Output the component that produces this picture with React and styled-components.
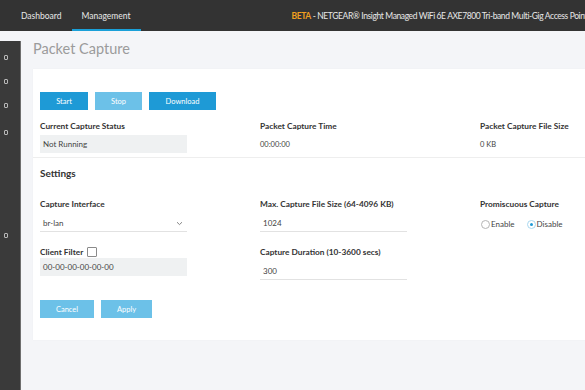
import React from "react";
import styled, { createGlobalStyle } from "styled-components";

const GlobalStyle = createGlobalStyle`
  html, body {
    margin: 0;
    padding: 0;
    background: #f4f5f8;
    font-family: "Lato", "Noto Sans", sans-serif;
    overflow: hidden;
  }
  * { box-sizing: border-box; }
`;

const Page = styled.div`
  width: 585px;
  height: 390px;
  display: flex;
  flex-direction: column;
  overflow: hidden;
`;

const Header = styled.div`
  display: flex;
  align-items: stretch;
  height: 31px;
  background: #333333;
  flex-shrink: 0;
  overflow: hidden;
`;

const Nav = styled.div`
  display: flex;
  padding-left: 11px;
`;

const Tab = styled.div`
  display: flex;
  align-items: center;
  padding: 0 10px;
  font-size: 8.5px;
  color: #e8e8e8;
  border-bottom: 2px solid ${(p) => (p.$active ? "#1aa0d8" : "transparent")};
  padding-top: 2px;
`;

const ProductTitle = styled.div`
  display: flex;
  align-items: center;
  margin-left: 151px;
  white-space: nowrap;
  font-size: 8.5px;
  letter-spacing: -0.39px;
  color: #e8e8e8;
  b {
    font-weight: 700;
    color: #f0a020;
  }
`;

const Body = styled.div`
  display: flex;
  flex: 1;
  min-height: 0;
`;

const Sidebar = styled.div`
  width: 21px;
  margin-top: 10px;
  background: #3a3a3a;
  border-right: 1px solid #6e6e6e;
  display: flex;
  flex-direction: column;
  align-items: flex-start;
  padding: 14px 0 0 4px;
  flex-shrink: 0;
`;

const SideIcon = styled.span`
  display: block;
  width: 4px;
  height: 5px;
  border: 1px solid #b8b8b8;
  border-radius: 1px;
  margin-bottom: ${(p) => p.$gap}px;
`;

const Main = styled.div`
  flex: 1;
  padding-left: 12px;
  min-width: 0;
`;

const PageTitle = styled.div`
  height: 38px;
  display: flex;
  align-items: center;
  padding-bottom: 3px;
  font-size: 14.5px;
  color: #9b9b9b;
`;

const Card = styled.div`
  width: 700px;
  background: #ffffff;
  padding: 23px 7px 22px;
  box-shadow: 0 0 1px rgba(0, 0, 0, 0.06);
`;

const ButtonRow = styled.div`
  display: flex;
  gap: 7px;
  margin-top: ${(p) => p.$top || 0}px;
`;

const Button = styled.div`
  height: 18px;
  width: ${(p) => p.$w}px;
  display: flex;
  align-items: center;
  justify-content: center;
  font-size: 7.5px;
  color: #ffffff;
  background: ${(p) => (p.$dim ? "#6cc1e8" : "#1e9ad6")};
`;

const Grid = styled.div`
  display: grid;
  grid-template-columns: 220px 220px 220px;
  align-items: start;
  margin-top: ${(p) => p.$top}px;
`;

const Field = styled.div`
  display: flex;
  flex-direction: column;
`;

const Label = styled.div`
  display: flex;
  align-items: center;
  gap: 4px;
  font-size: 8.3px;
  font-weight: 700;
  color: #333333;
  height: 12px;
  margin-top: ${(p) => p.$top || 0}px;
`;

const GrayBox = styled.div`
  width: 147px;
  height: 18px;
  margin-top: ${(p) => p.$top || 0}px;
  background: #eff1f2;
  display: flex;
  align-items: center;
  padding-left: 3px;
  font-size: 8px;
  color: #444;
`;

const PlainValue = styled.div`
  font-size: 7.5px;
  color: #444;
  height: 18px;
  margin-top: 3px;
  display: flex;
  align-items: center;
`;

const LineInput = styled.div`
  width: 147px;
  height: 22px;
  border-bottom: 1px solid #e2e2e2;
  display: flex;
  align-items: flex-end;
  justify-content: space-between;
  padding: 0 4px 3px 3px;
  font-size: 8px;
  line-height: 10px;
  color: #444;
  svg {
    margin-bottom: 2px;
  }
`;

const Divider = styled.div`
  height: 1px;
  background: #eeeeee;
  margin: 4px -7px 0;
`;

const SectionTitle = styled.div`
  font-size: 10px;
  font-weight: 700;
  color: #333;
  height: 14px;
  margin: 8px 0 0;
  display: flex;
  align-items: center;
`;

const Checkbox = styled.span`
  width: 10px;
  height: 10px;
  border: 1px solid #8a8a8a;
  border-radius: 1px;
  background: #fff;
`;

const RadioGroup = styled.div`
  display: flex;
  align-items: flex-end;
  gap: 12px;
  height: 22px;
  padding: 0 0 3px 1px;
`;

const RadioOption = styled.div`
  display: flex;
  align-items: center;
  gap: 1px;
  font-size: 8px;
  line-height: 10px;
  color: #444;
`;

const RadioDot = styled.span`
  width: 9px;
  height: 9px;
  border-radius: 50%;
  border: 1px solid ${(p) => (p.$on ? "#a9d8f0" : "#b5b5b5")};
  display: flex;
  align-items: center;
  justify-content: center;
  &::after {
    content: "";
    width: 3px;
    height: 3px;
    border-radius: 50%;
    background: ${(p) => (p.$on ? "#1e9ad6" : "transparent")};
  }
`;

const Chevron = () => (
  <svg width="7" height="5" viewBox="0 0 7 5">
    <path d="M1 1.2 L3.5 3.6 L6 1.2" fill="none" stroke="#777" strokeWidth="0.9" />
  </svg>
);

export default function App() {
  return (
    <Page>
      <GlobalStyle />
      <Header>
        <Nav>
          <Tab>Dashboard</Tab>
          <Tab $active>Management</Tab>
        </Nav>
        <ProductTitle>
          <b>BETA</b>&nbsp;- NETGEAR® Insight Managed WiFi 6E AXE7800 Tri-band Multi-Gig Access Point
        </ProductTitle>
      </Header>
      <Body>
        <Sidebar>
          <SideIcon $gap={19} />
          <SideIcon $gap={19} />
          <SideIcon $gap={22} />
          <SideIcon $gap={98} />
          <SideIcon $gap={0} />
        </Sidebar>
        <Main>
          <PageTitle>Packet Capture</PageTitle>
          <Card>
            <ButtonRow>
              <Button $w={48}>Start</Button>
              <Button $w={47} $dim>Stop</Button>
              <Button $w={67}>Download</Button>
            </ButtonRow>
            <Grid $top={10}>
              <Field>
                <Label>Current Capture Status</Label>
                <GrayBox $top={3}>Not Running</GrayBox>
              </Field>
              <Field>
                <Label>Packet Capture Time</Label>
                <PlainValue>00:00:00</PlainValue>
              </Field>
              <Field>
                <Label>Packet Capture File Size</Label>
                <PlainValue>0 KB</PlainValue>
              </Field>
            </Grid>
            <Divider />
            <SectionTitle>Settings</SectionTitle>
            <Grid $top={18}>
              <Field>
                <Label>Capture Interface</Label>
                <LineInput>
                  br-lan
                  <Chevron />
                </LineInput>
                <Label $top={14}>
                  Client Filter <Checkbox />
                </Label>
                <GrayBox>00-00-00-00-00-00</GrayBox>
              </Field>
              <Field>
                <Label>Max. Capture File Size (64-4096 KB)</Label>
                <LineInput>1024</LineInput>
                <Label $top={14}>Capture Duration (10-3600 secs)</Label>
                <LineInput>300</LineInput>
              </Field>
              <Field>
                <Label>Promiscuous Capture</Label>
                <RadioGroup>
                  <RadioOption>
                    <RadioDot />
                    Enable
                  </RadioOption>
                  <RadioOption>
                    <RadioDot $on />
                    Disable
                  </RadioOption>
                </RadioGroup>
              </Field>
            </Grid>
            <ButtonRow $top={20}>
              <Button $w={54} $dim>Cancel</Button>
              <Button $w={51} $dim>Apply</Button>
            </ButtonRow>
          </Card>
        </Main>
      </Body>
    </Page>
  );
}
